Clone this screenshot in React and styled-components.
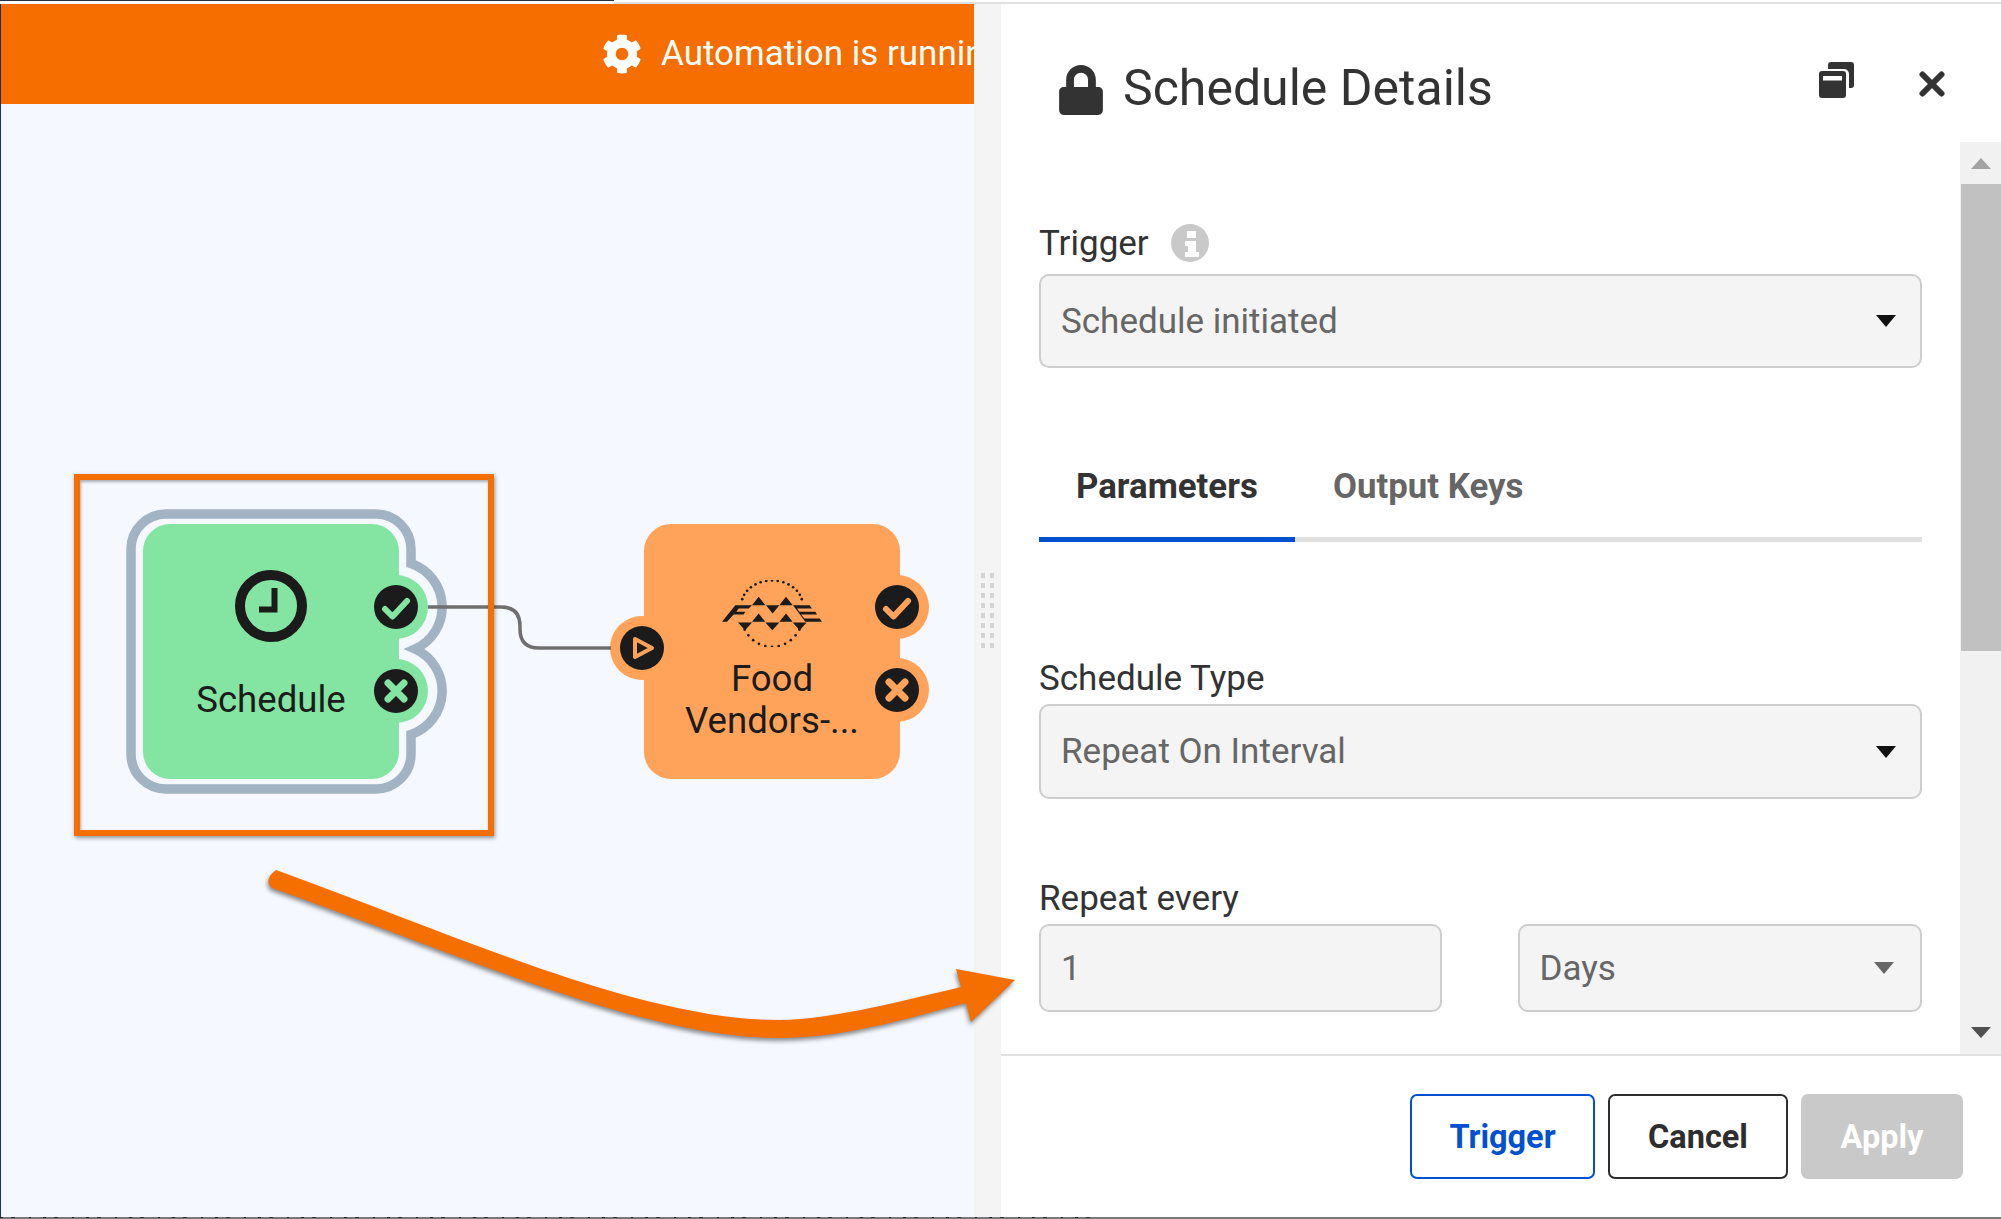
import React from 'react';
import styled, { createGlobalStyle } from 'styled-components';
import { FaCog, FaLock } from 'react-icons/fa';

const Global = createGlobalStyle`
  html, body { margin: 0; padding: 0; background: #fff; }
  body { font-family: 'Roboto', 'Liberation Sans', sans-serif; }
  * { box-sizing: border-box; }
`;

const Page = styled.div`
  position: relative;
  width: 2001px;
  height: 1219px;
  overflow: hidden;
  display: flex;
  flex-direction: column;
  background: #fff;
`;

const TopEdge = styled.div`
  display: flex;
  height: 4px;
  flex: none;
`;

const TopDark = styled.div`
  width: 614px;
  height: 1px;
  background: #2b3040;
`;

const TopGray = styled.div`
  flex: 1;
  height: 2px;
  margin-top: 2px;
  background: #e0e0e0;
`;

const Main = styled.div`
  flex: 1;
  display: flex;
  min-height: 0;
`;

const BottomEdge = styled.div`
  height: 2px;
  flex: none;
  background: #77787a;
`;

/* tops of the cut-off text that peeks out under the page */
const BottomTicks = styled.div`
  width: 1100px;
  height: 1px;
  background: repeating-linear-gradient(
    90deg,
    #222 0 3px,
    transparent 3px 11px,
    #333 11px 15px,
    transparent 15px 29px,
    #222 29px 31px,
    transparent 31px 43px
  );
`;

const Canvas = styled.div`
  position: relative;
  width: 974px;
  flex: none;
  background: #f5f9ff;
  border-left: 1px solid #17306f;
`;

const Banner = styled.div`
  height: 100px;
  background: #f66d00;
  color: #fff;
  display: flex;
  align-items: center;
  gap: 19px;
  padding: 0 0 1px 601px;
  font-size: 35px;
  white-space: nowrap;
  overflow: hidden;
  svg { width: 40px; height: 40px; flex: none; }
`;

const Gutter = styled.div`
  width: 27px;
  flex: none;
  background: #f4f4f4;
  display: flex;
  align-items: flex-start;
  padding: 569px 0 0 7px;
`;

const Grip = styled.div`
  display: grid;
  grid-template-columns: repeat(2, 4px);
  grid-auto-rows: 5px;
  gap: 5px;
`;

const GripDot = styled.span`
  background: #d4d4d4;
`;

const Node = styled.div`
  position: absolute;
  left: ${p => p.$x}px;
  top: ${p => p.$y}px;
  width: 256px;
  height: 255px;
  border-radius: 27px;
  background: ${p => p.$tone};
  color: #1b1b1b;
  font-size: 36.6px;
  line-height: 42px;
  text-align: center;
  padding-top: ${p => p.$pad}px;
`;

const NodeOutline = styled.svg`
  position: absolute;
  left: -20px;
  top: -20px;
  overflow: visible;
`;

const NodeIcon = styled.svg`
  display: block;
  margin: 0 auto;
`;

const NodeLabel = styled.div`
  position: relative;
  margin-top: ${p => p.$gap}px;
  width: 210px;
  margin-left: auto;
  margin-right: auto;
`;

const Port = styled.div`
  position: absolute;
  left: ${p => p.$x}px;
  top: ${p => p.$y}px;
  width: 64px;
  height: 64px;
  border-radius: 50%;
  background: ${p => p.$tone};
  display: flex;
  align-items: center;
  justify-content: center;
`;

const Wire = styled.svg`
  position: absolute;
  left: 0;
  top: 0;
  pointer-events: none;
`;

const Highlight = styled.div`
  position: absolute;
  left: 73px;
  top: 470px;
  width: 420px;
  height: 362px;
  border: 6px solid #f56e00;
  box-shadow: 1px 2px 4px rgba(60, 60, 60, 0.55), inset 1px 2px 3px rgba(60, 60, 60, 0.4);
`;

const Arrow = styled.svg`
  position: absolute;
  left: 0;
  top: 0;
  pointer-events: none;
  filter: drop-shadow(-1px 3px 2px rgba(50, 50, 50, 0.55));
`;

const Panel = styled.div`
  flex: 1;
  display: flex;
  flex-direction: column;
  min-width: 0;
`;

const PanelHeader = styled.div`
  height: 138px;
  flex: none;
  position: relative;
  display: flex;
  padding: 61px 56px 0 58px;
`;

const Title = styled.div`
  display: flex;
  align-items: center;
  gap: 20px;
  height: 50px;
  flex: 1;
  font-size: 50px;
  color: #333;
  svg { width: 44px; height: 50px; color: #333; flex: none; }
`;

const TitleText = styled.span`
  margin-top: -4px;
`;

const HeaderTools = styled.div`
  display: flex;
  align-items: flex-start;
  gap: 63px;
  margin-top: -3px;
`;

const Body = styled.div`
  flex: 1;
  display: flex;
  min-height: 0;
`;

const Form = styled.div`
  flex: 1;
  padding: 81px 38px 0 38px;
`;

const Label = styled.div`
  display: flex;
  align-items: center;
  gap: 22px;
  height: 40px;
  margin-top: ${p => p.$top || 0}px;
  margin-bottom: ${p => p.$bottom}px;
  font-size: 35px;
  color: #333;
`;

const Field = styled.div`
  flex: ${p => (p.$grow ? '1' : 'none')};
  display: flex;
  align-items: center;
  justify-content: space-between;
  height: ${p => p.$h}px;
  padding: 0 ${p => p.$right || 24}px 0 20px;
  background: #f4f4f4;
  border: 2px solid #cdcdcd;
  border-radius: 10px;
  font-size: 35px;
  color: #666;
`;

const Caret = styled.span`
  width: 0;
  height: 0;
  border-left: 10.5px solid transparent;
  border-right: 10.5px solid transparent;
  border-top: 12px solid ${p => p.$color};
`;

const Tabs = styled.div`
  display: flex;
  align-items: flex-start;
  gap: 1px;
  height: 102px;
  margin-top: 72px;
  margin-bottom: 116px;
  border-bottom: 5px solid #e0e0e0;
`;

const Tab = styled.div`
  width: ${p => p.$w}px;
  height: 102px;
  padding: 23px 0 0 37px;
  font-size: 34.8px;
  line-height: 46px;
  font-weight: 700;
  color: ${p => (p.$active ? '#333' : '#666')};
  border-bottom: ${p => (p.$active ? '5px solid #0050d0' : 'none')};
`;

const TwoCols = styled.div`
  display: flex;
  gap: 76px;
`;

const Scrollbar = styled.div`
  width: 41px;
  flex: none;
  background: #f1f1f1;
  display: flex;
  flex-direction: column;
  align-items: center;
`;

const ScrollEnd = styled.div`
  height: ${p => p.$h}px;
  flex: none;
  display: flex;
  align-items: center;
  justify-content: center;
`;

const ScrollThumb = styled.div`
  align-self: stretch;
  margin-left: 1px;
  height: 467px;
  background: #c1c1c1;
`;

const ScrollGap = styled.div`
  flex: 1;
`;

const ScrollArrow = styled.span`
  width: 0;
  height: 0;
  border-left: 10px solid transparent;
  border-right: 10px solid transparent;
  ${p => (p.$up
    ? 'border-bottom: 11px solid #a3a3a3;'
    : 'border-top: 11px solid #505050;')}
`;

const Footer = styled.div`
  flex: none;
  height: 163px;
  border-top: 2px solid #e0e0e0;
  display: flex;
  justify-content: flex-end;
  align-items: flex-start;
  gap: 13px;
  padding: 38px 38px 0 0;
`;

const Button = styled.div`
  width: ${p => p.$w}px;
  height: 85px;
  display: flex;
  align-items: center;
  justify-content: center;
  border-radius: 7px;
  font-size: 32.5px;
  font-weight: 700;
  color: ${p => p.$color};
  background: ${p => p.$bg || '#fff'};
  border: 2px solid ${p => p.$line};
`;

const Check = ({ fg }) => (
  <svg width="44" height="44" viewBox="0 0 44 44">
    <circle cx="22" cy="22" r="22" fill="#1b1b1b" />
    <path d="M11 24l7.5 7.5L33 16" fill="none" stroke={fg} strokeWidth="6" strokeLinecap="round" strokeLinejoin="round" />
  </svg>
);

const Cross = ({ fg }) => (
  <svg width="44" height="44" viewBox="0 0 44 44">
    <circle cx="22" cy="22" r="22" fill="#1b1b1b" />
    <path d="M14 14l16 16M30 14L14 30" fill="none" stroke={fg} strokeWidth="7" strokeLinecap="round" />
  </svg>
);

const Play = ({ fg }) => (
  <svg width="44" height="44" viewBox="0 0 44 44">
    <circle cx="22" cy="22" r="22" fill="#1b1b1b" />
    <path d="M15 13L32 22L15 31Z" fill="#1b1b1b" stroke={fg} strokeWidth="4" strokeLinejoin="round" />
  </svg>
);

const Clock = () => (
  <NodeIcon width="72" height="72" viewBox="0 0 72 72">
    <circle cx="36" cy="36" r="31" fill="none" stroke="#1b1b1b" strokeWidth="10" />
    <path d="M39.5 18V39.5H24" fill="none" stroke="#1b1b1b" strokeWidth="6" />
  </NodeIcon>
);

// dots of the round seal behind the letters
const arcDots = (cx, cy, rx, ry, from, to, n) =>
  Array.from({ length: n }, (_, i) => {
    const a = ((from + ((to - from) * i) / (n - 1)) * Math.PI) / 180;
    return <circle key={i} cx={cx + rx * Math.cos(a)} cy={cy + ry * Math.sin(a)} r="4" />;
  });

const FmeLogo = () => (
  <NodeIcon width="100" height="67" viewBox="125 30 300 200" fill="#1b1b1b">
    {arcDots(275, 105, 92, 74, 194, 346, 15)}
    {arcDots(275, 135, 92, 95, 27, 153, 11)}
    <path d="M215 105l20-25 20 25zM297 105l20-25 20 25zM257 105h40l-20 25zM215 155l20-25 20 25zM297 155l20-25 20 25zM173 157h42l-21 23zM255 157h42l-21 23zM337 157h42l-21 23z" />
    <path d="M125 155l40-50h50l-10 10h-30l-7 10h27l-5 8h-30l-20 22z" />
    <path d="M338 105h50l7 10h-45l7 10h48l5 8h-48l10 12h46l7 10h-50z" />
  </NodeIcon>
);

const CopyIcon = () => (
  <svg width="37" height="36" viewBox="0 0 37 36">
    <rect x="9" y="0" width="26" height="26" rx="3" fill="#333" />
    <rect x="-1" y="7" width="31" height="31" rx="5" fill="#fff" />
    <rect x="0" y="9" width="27" height="27" rx="3" fill="#333" />
    <rect x="4" y="14" width="19" height="4.5" fill="#fff" />
  </svg>
);

const CloseIcon = () => (
  <svg width="26" height="26" viewBox="0 0 26 26" style={{ marginTop: 9 }}>
    <path d="M3.5 3.5l19 19M22.5 3.5l-19 19" fill="none" stroke="#333" strokeWidth="6" strokeLinecap="round" />
  </svg>
);

const InfoIcon = () => (
  <svg width="38" height="38" viewBox="0 0 38 38">
    <circle cx="19" cy="19" r="19" fill="#c9c9c9" />
    <path d="M16 7h9v7h-9zM14 17h11v11h3v5H14v-5h3v-6h-3z" fill="#fff" />
  </svg>
);

const App = () => (
  <Page>
    <Global />
    <TopEdge>
      <TopDark />
      <TopGray />
    </TopEdge>
    <Main>
      <Canvas>
        <Banner>
          <FaCog />
          Automation is running
        </Banner>

        <Node $x={142} $y={520} $tone="#84e5a3" $pad={46}>
          <NodeOutline width="340" height="300" viewBox="123 504 340 300">
            <path
              d="M166 514H376A35 35 0 0 1 411 549V563.5A46 46 0 0 1 415 649A46 46 0 0 1 411 734.5V754A35 35 0 0 1 376 789H166A35 35 0 0 1 131 754V549A35 35 0 0 1 166 514Z"
              fill="none"
              stroke="#a2b4c4"
              strokeWidth="9.5"
            />
          </NodeOutline>
          <Clock />
          <NodeLabel $gap={37}>Schedule</NodeLabel>
          <Port $x={221} $y={51} $tone="#84e5a3"><Check fg="#84e5a3" /></Port>
          <Port $x={221} $y={135} $tone="#84e5a3"><Cross fg="#84e5a3" /></Port>
        </Node>

        <Node $x={643} $y={520} $tone="#ffa25a" $pad={56}>
          <FmeLogo />
          <NodeLabel $gap={11}>Food Vendors-...</NodeLabel>
          <Port $x={221} $y={51} $tone="#ffa25a"><Check fg="#ffa25a" /></Port>
          <Port $x={221} $y={134} $tone="#ffa25a"><Cross fg="#ffa25a" /></Port>
          <Port $x={-34} $y={92} $tone="#ffa25a"><Play fg="#ffa25a" /></Port>
        </Node>

        <Wire width="973" height="1213">
          <path d="M427 603H500Q519 603 519 622V625Q519 644 538 644H610" fill="none" stroke="#6f6f6f" strokeWidth="3.5" />
        </Wire>
        <Highlight />
      </Canvas>

      <Gutter>
        <Grip>
          {Array.from({ length: 16 }, (_, i) => <GripDot key={i} />)}
        </Grip>
      </Gutter>

      <Panel>
        <PanelHeader>
          <Title>
            <FaLock />
            <TitleText>Schedule Details</TitleText>
          </Title>
          <HeaderTools>
            <CopyIcon />
            <CloseIcon />
          </HeaderTools>
        </PanelHeader>

        <Body>
          <Form>
            <Label $bottom={11}>Trigger <InfoIcon /></Label>
            <Field $h={94}>Schedule initiated <Caret $color="#111" /></Field>

            <Tabs>
              <Tab $active $w={256}>Parameters</Tab>
              <Tab $w={300}>Output Keys</Tab>
            </Tabs>

            <Label $bottom={6}>Schedule Type</Label>
            <Field $h={95}>Repeat On Interval <Caret $color="#111" /></Field>

            <Label $top={79} $bottom={6}>Repeat every</Label>
            <TwoCols>
              <Field $grow $h={88}>1</Field>
              <Field $grow $h={88} $right={26}>Days <Caret $color="#666" /></Field>
            </TwoCols>
          </Form>
          <Scrollbar>
            <ScrollEnd $h={42}><ScrollArrow $up /></ScrollEnd>
            <ScrollThumb />
            <ScrollGap />
            <ScrollEnd $h={44}><ScrollArrow /></ScrollEnd>
          </Scrollbar>
        </Body>

        <Footer>
          <Button $w={185} $color="#0050d0" $line="#0050d0">Trigger</Button>
          <Button $w={180} $color="#2e2e2e" $line="#2e2e2e">Cancel</Button>
          <Button $w={162} $color="#fff" $line="#c9c9c9" $bg="#c9c9c9">Apply</Button>
        </Footer>
      </Panel>
    </Main>
    <BottomEdge>
      <BottomTicks />
    </BottomEdge>

    <Arrow width="2001" height="1219">
      <path
        d="M276 870C456 935 640 1020 779 1020C825 1020 891 1004 961 987L956 969L1015 980L971 1022L966 1003C895 1022 840 1038 779 1038C640 1038 450 950 272 888Q263 880 276 870Z"
        fill="#f56e00"
      />
    </Arrow>
  </Page>
);

export default App;
